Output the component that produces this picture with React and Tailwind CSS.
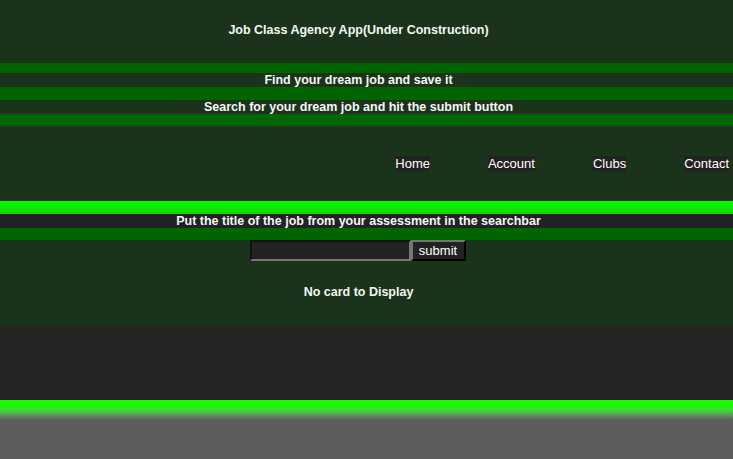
import React from 'react';

const navLinks = ['Home', 'Account', 'Clubs', 'Contact'];

function Band({ children, bg = 'bg-[#1b331b]' }) {
  return (
    <div className={`${bg} h-[14px] pr-4 flex items-center justify-center`}>
      <p className="text-[12.5px] leading-[14px] font-bold text-[#f4f7f4]">{children}</p>
    </div>
  );
}

export default function App() {
  return (
    <div className="min-h-screen bg-[#5c5c5c] font-['Liberation_Sans',Arial,sans-serif]">
      <header className="bg-[#1b331b] h-[63px] pr-4 pt-[23px] text-center">
        <h1 className="text-[12.5px] leading-[15px] font-bold text-[#f4f7f4]">Job Class Agency App(Under Construction)</h1>
      </header>

      <div className="h-[10px] bg-[#006400]"></div>
      <Band>Find your dream job and save it</Band>
      <div className="h-[13px] bg-[#006400]"></div>
      <Band>Search for your dream job and hit the submit button</Band>
      <div className="h-[12px] bg-[#006400]"></div>

      <nav className="bg-[#1b331b] h-[75px] flex items-center justify-end gap-[58px] pr-[4px]">
        {navLinks.map((link) => (
          <a key={link} href="#" className="bg-[#222222] text-[13px] leading-[15px] text-white">
            {link}
          </a>
        ))}
      </nav>

      <div className="h-[13px] bg-gradient-to-b from-[#00ff00] to-[#18d400]"></div>
      <Band bg="bg-[#222222]">Put the title of the job from your assessment in the searchbar</Band>
      <div className="h-[12px] bg-[#006400]"></div>

      <main className="bg-[#1b331b] h-[85px] pr-4 flex flex-col items-center">
        <form className="flex -translate-x-px" onSubmit={(e) => e.preventDefault()}>
          <input
            type="text"
            className="w-[161px] h-[21px] bg-[#222222] border-2 border-t-[#111111] border-l-[#111111] border-b-[#767676] border-r-[#767676] outline-none text-white text-[13px] px-1"
          />
          <button
            type="submit"
            className="w-[55px] h-[21px] bg-[#222222] border-2 border-t-[#767676] border-l-[#767676] border-b-black border-r-black text-[13px] leading-[15px] text-white"
          >
            submit
          </button>
        </form>
        <p className="mt-[24px] text-[12.5px] leading-[15px] font-bold text-[#f4f7f4]">No card to Display</p>
      </main>

      <section className="bg-[#232523] h-[75px]"></section>

      <footer className="h-[20px] bg-gradient-to-b from-[#1aff00] via-[#22ee11] via-40% to-[#5c5c5c]"></footer>
    </div>
  );
}
